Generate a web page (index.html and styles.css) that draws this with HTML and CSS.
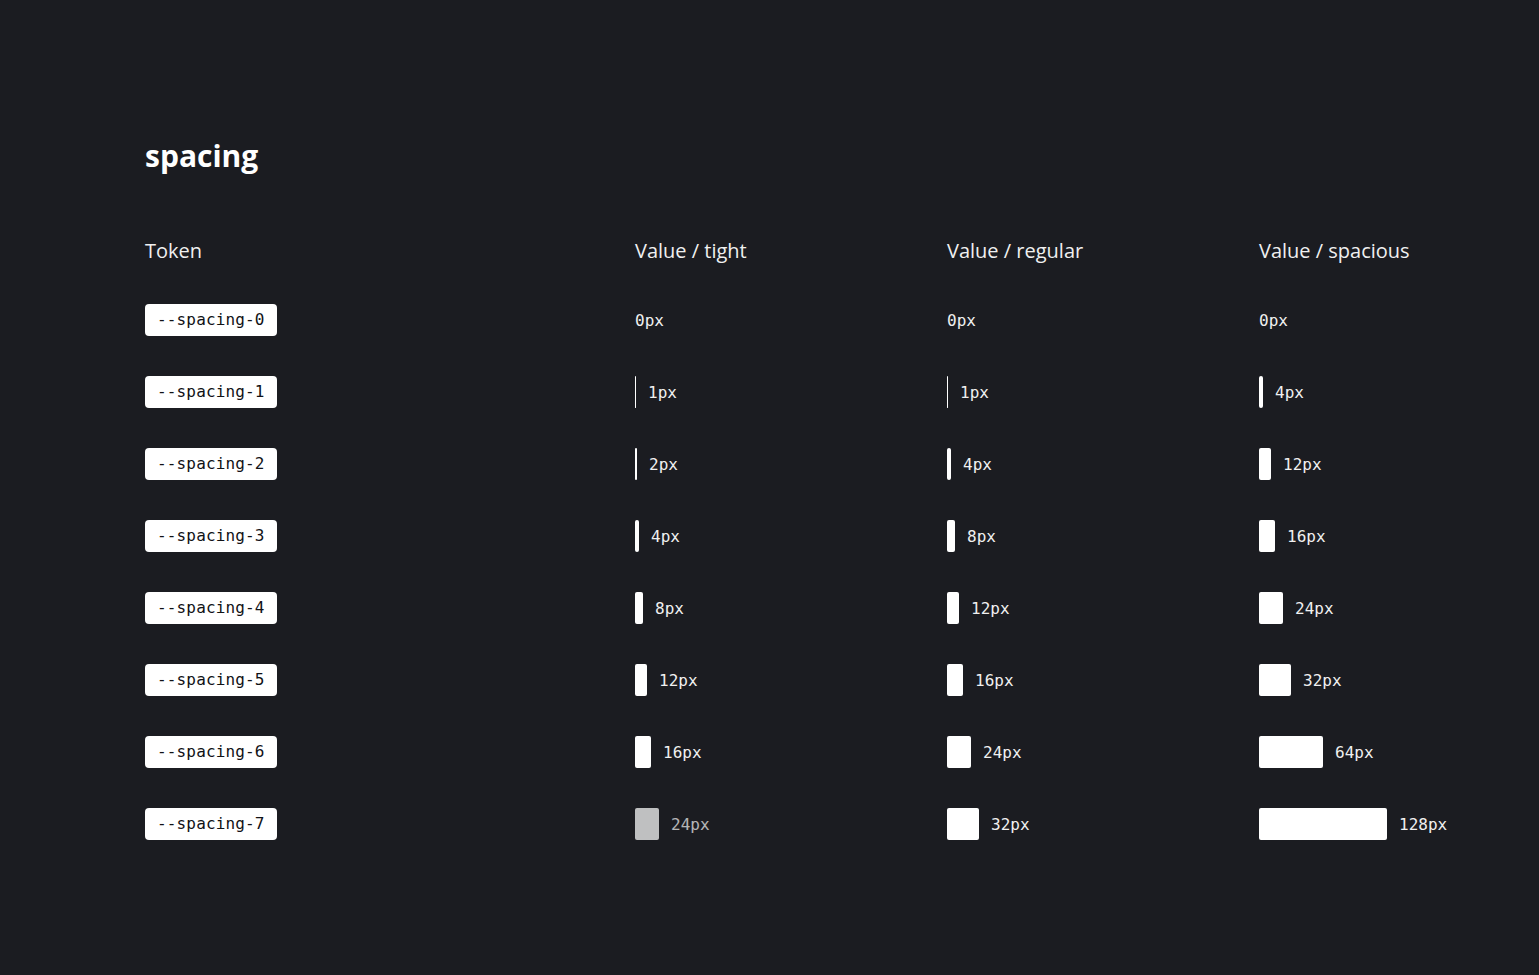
FILE: index.html
```html
<!DOCTYPE html>
<html>
<head>
<meta charset="utf-8">
<link rel="stylesheet" href="styles.css">
</head>
<body>
<main class="page">
  <h1 class="title">spacing</h1>
  <div class="table">
    <div class="head">Token</div>
    <div class="head">Value / tight</div>
    <div class="head">Value / regular</div>
    <div class="head">Value / spacious</div>

    <div class="cell"><span class="chip">--spacing-0</span></div>
    <div class="cell"><span class="val">0px</span></div>
    <div class="cell"><span class="val">0px</span></div>
    <div class="cell"><span class="val">0px</span></div>

    <div class="cell"><span class="chip">--spacing-1</span></div>
    <div class="cell"><span class="bar" style="width:1px"></span><span class="val">1px</span></div>
    <div class="cell"><span class="bar" style="width:1px"></span><span class="val">1px</span></div>
    <div class="cell"><span class="bar" style="width:4px"></span><span class="val">4px</span></div>

    <div class="cell"><span class="chip">--spacing-2</span></div>
    <div class="cell"><span class="bar" style="width:2px"></span><span class="val">2px</span></div>
    <div class="cell"><span class="bar" style="width:4px"></span><span class="val">4px</span></div>
    <div class="cell"><span class="bar" style="width:12px"></span><span class="val">12px</span></div>

    <div class="cell"><span class="chip">--spacing-3</span></div>
    <div class="cell"><span class="bar" style="width:4px"></span><span class="val">4px</span></div>
    <div class="cell"><span class="bar" style="width:8px"></span><span class="val">8px</span></div>
    <div class="cell"><span class="bar" style="width:16px"></span><span class="val">16px</span></div>

    <div class="cell"><span class="chip">--spacing-4</span></div>
    <div class="cell"><span class="bar" style="width:8px"></span><span class="val">8px</span></div>
    <div class="cell"><span class="bar" style="width:12px"></span><span class="val">12px</span></div>
    <div class="cell"><span class="bar" style="width:24px"></span><span class="val">24px</span></div>

    <div class="cell"><span class="chip">--spacing-5</span></div>
    <div class="cell"><span class="bar" style="width:12px"></span><span class="val">12px</span></div>
    <div class="cell"><span class="bar" style="width:16px"></span><span class="val">16px</span></div>
    <div class="cell"><span class="bar" style="width:32px"></span><span class="val">32px</span></div>

    <div class="cell"><span class="chip">--spacing-6</span></div>
    <div class="cell"><span class="bar" style="width:16px"></span><span class="val">16px</span></div>
    <div class="cell"><span class="bar" style="width:24px"></span><span class="val">24px</span></div>
    <div class="cell"><span class="bar" style="width:64px"></span><span class="val">64px</span></div>

    <div class="cell"><span class="chip">--spacing-7</span></div>
    <div class="cell dim"><span class="bar" style="width:24px"></span><span class="val">24px</span></div>
    <div class="cell"><span class="bar" style="width:32px"></span><span class="val">32px</span></div>
    <div class="cell"><span class="bar" style="width:128px"></span><span class="val">128px</span></div>
  </div>
</main>
</body>
</html>
```
FILE: styles.css
```css
html, body {
  margin: 0;
  padding: 0;
  background: #1b1c21;
}
body {
  font-family: "Open Sans", "Liberation Sans", sans-serif;
  color: #f2f2f2;
}
.page {
  padding: 134px 145px 100px;
}
.title {
  margin: 0;
  font-size: 30px;
  font-weight: 700;
  line-height: 44px;
  color: #ffffff;
}
.table {
  margin-top: 37px;
  display: grid;
  grid-template-columns: 490px 312px 312px 1fr;
  grid-template-rows: 69px;
  grid-auto-rows: 72px;
  align-items: center;
}
.head {
  font-size: 20px;
  line-height: 28px;
  padding-top: 3px;
  color: #f0f0f0;
}
.cell {
  display: flex;
  align-items: center;
  gap: 12px;
}
.chip {
  display: inline-block;
  background: #ffffff;
  color: #111216;
  border-radius: 4px;
  height: 32px;
  line-height: 32px;
  padding: 0 12px;
  font-family: "DejaVu Sans Mono", "Liberation Mono", monospace;
  font-size: 16px;
  letter-spacing: 0.15px;
}
.bar {
  display: block;
  height: 32px;
  background: #ffffff;
  border-radius: 2px;
}
.val {
  font-family: "DejaVu Sans Mono", "Liberation Mono", monospace;
  font-size: 16px;
  color: #f0f0f0;
}
.dim {
  opacity: 0.72;
}
```
